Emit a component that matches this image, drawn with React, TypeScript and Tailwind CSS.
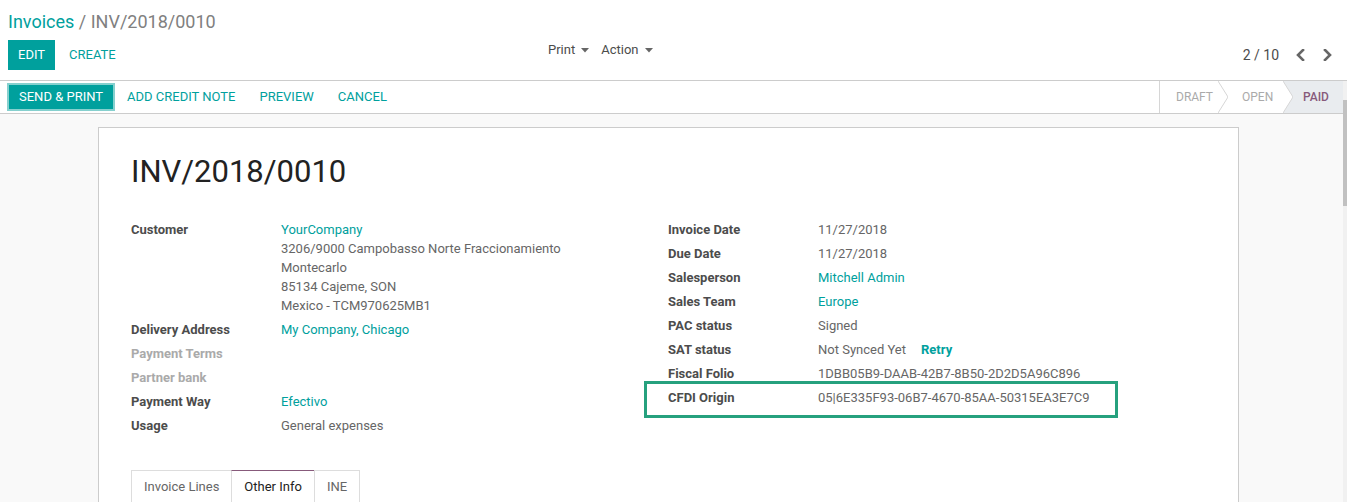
import React from 'react';

const TEAL = '#00A09D';

function Caret() {
  return (
    <svg width="8" height="5" viewBox="0 0 8 5" className="ml-[6px] inline-block">
      <polygon points="0,0 8,0 4,4.5" fill="#666" />
    </svg>
  );
}

function PagerArrow({ dir }: { dir: 'left' | 'right' }) {
  const pts = dir === 'left' ? '7,1 2,6 7,11' : '2,1 7,6 2,11';
  return (
    <svg width="9" height="12" viewBox="0 0 9 12">
      <polyline points={pts} fill="none" stroke="#666" strokeWidth="2.6" strokeLinecap="square" />
    </svg>
  );
}

function Chevron({ filled }: { filled?: boolean }) {
  return (
    <svg width="10" height="32" viewBox="0 0 10 32" className="shrink-0">
      {filled && <polygon points="0,0 10,0 10,16" fill="#e9ecef" />}
      {filled && <polygon points="10,16 10,32 0,32" fill="#e9ecef" />}
      <polyline points="0,0 10,16 0,32" fill="none" stroke="#d6d6d6" strokeWidth="1" />
    </svg>
  );
}

type Field = {
  label: string;
  lines?: string[];
  link?: boolean;
  muted?: boolean;
  extra?: React.ReactNode;
  highlight?: boolean;
};

const leftFields: Field[] = [
  {
    label: 'Customer',
    lines: [
      'YourCompany',
      '3206/9000 Campobasso Norte Fraccionamiento',
      'Montecarlo',
      '85134 Cajeme, SON',
      'Mexico - TCM970625MB1',
    ],
  },
  { label: 'Delivery Address', lines: ['My Company, Chicago'], link: true },
  { label: 'Payment Terms', muted: true },
  { label: 'Partner bank', muted: true },
  { label: 'Payment Way', lines: ['Efectivo'], link: true },
  { label: 'Usage', lines: ['General expenses'] },
];

const rightFields: Field[] = [
  { label: 'Invoice Date', lines: ['11/27/2018'] },
  { label: 'Due Date', lines: ['11/27/2018'] },
  { label: 'Salesperson', lines: ['Mitchell Admin'], link: true },
  { label: 'Sales Team', lines: ['Europe'], link: true },
  { label: 'PAC status', lines: ['Signed'] },
  {
    label: 'SAT status',
    lines: ['Not Synced Yet'],
    extra: <span className="ml-[15px] font-bold text-[#00A09D]">Retry</span>,
  },
  { label: 'Fiscal Folio', lines: ['1DBB05B9-DAAB-42B7-8B50-2D2D5A96C896'] },
  { label: 'CFDI Origin', lines: ['05|6E335F93-06B7-4670-85AA-50315EA3E7C9'], highlight: true },
];

function FieldRow({ field }: { field: Field }) {
  const lines = field.lines ?? [];
  return (
    <div className="relative flex pb-[5px] leading-[19px]">
      <div
        className={`w-[150px] shrink-0 font-bold ${field.muted ? 'text-[#aaaaaa]' : 'text-[#4c4c4c]'}`}
      >
        {field.label}
      </div>
      <div className="text-[#666]">
        {lines.map((line, i) => (
          <div key={i} className={field.link || (field.label === 'Customer' && i === 0) ? 'text-[#00A09D]' : ''}>
            {line}
            {i === 0 && field.extra}
          </div>
        ))}
      </div>
      {field.highlight && (
        <div className="absolute left-[-24px] top-[-7px] w-[474px] h-[37px] border-[3px] border-[#26a17e]" />
      )}
    </div>
  );
}

export default function App() {
  return (
    <div
      className="h-[502px] w-[1347px] overflow-hidden bg-white text-[13px]"
      style={{ fontFamily: 'Roboto, "Noto Sans", sans-serif' }}
    >
      {/* Control panel */}
      <div className="h-[81px] border-b border-[#cccccc] bg-white px-[8px] pt-[8px]">
        <div className="h-[28px] text-[18px] leading-[28px]">
          <span style={{ color: TEAL }}>Invoices</span>
          <span className="text-[#808080]"> / INV/2018/0010</span>
        </div>
        <div className="mt-[4px] flex h-[30px]">
          <div className="flex w-[540px] items-center">
            <button className="h-[30px] bg-[#00A09D] px-[10px] text-white uppercase">Edit</button>
            <button className="h-[30px] px-[14px] uppercase text-[#00A09D]">Create</button>
          </div>
          <div className="flex h-[20px] items-center leading-[20px] text-[#4c4c4c]">
            <span className="flex items-center">
              Print
              <Caret />
            </span>
            <span className="ml-[12px] flex items-center">
              Action
              <Caret />
            </span>
          </div>
          <div className="ml-auto flex items-center pr-[7px] text-[#4c4c4c]">
            <span className="text-[14px]">2 / 10</span>
            <span className="ml-[17px]">
              <PagerArrow dir="left" />
            </span>
            <span className="ml-[18px]">
              <PagerArrow dir="right" />
            </span>
          </div>
        </div>
      </div>

      <div className="flex h-[421px]">
        <div className="flex-1 bg-[#f9f9f9]">
          {/* Status bar */}
          <div className="flex h-[33px] items-stretch border-b border-[#cccccc] bg-white">
            <div className="flex items-center pl-[7px]">
              <button className="h-[28px] border-2 border-[#86d0ce] bg-[#00A09D] px-[10px] uppercase text-white">
                Send &amp; Print
              </button>
              <button className="h-[28px] px-[12px] uppercase text-[#00A09D]">Add Credit Note</button>
              <button className="h-[28px] px-[12px] uppercase text-[#00A09D]">Preview</button>
              <button className="h-[28px] px-[12px] uppercase text-[#00A09D]">Cancel</button>
            </div>
            <div className="ml-auto flex items-stretch border-l border-[#d6d6d6] text-[12px] uppercase">
              <div className="flex w-[58px] items-center pl-[16px] text-[#aaaaaa]">Draft</div>
              <Chevron />
              <div className="flex w-[55px] items-center pl-[14px] text-[#aaaaaa]">Open</div>
              <Chevron filled />
              <div className="flex w-[50px] items-center bg-[#e9ecef] pl-[10px] font-medium text-[#875A7B]">
                Paid
              </div>
            </div>
          </div>

          {/* Sheet */}
          <div className="ml-[98px] mt-[13px] w-[1141px] border border-[#cccccc] bg-white px-[32px] pt-[24px]">
            <h1 className="text-[31px] leading-[40px] text-[#222]">INV/2018/0010</h1>
            <div className="mt-[28px] flex">
              <div className="w-[537px]">
                {leftFields.map((f) => (
                  <FieldRow key={f.label} field={f} />
                ))}
              </div>
              <div className="flex-1">
                {rightFields.map((f) => (
                  <FieldRow key={f.label} field={f} />
                ))}
              </div>
            </div>

            {/* Notebook tabs */}
            <div className="mt-[30px] flex border-b border-[#dddddd]">
              <div className="h-[33px] border border-b-0 border-[#dddddd] px-[12px] leading-[32px] text-[#666]">
                Invoice Lines
              </div>
              <div className="-ml-px h-[33px] border border-b-0 border-[#dddddd] border-t-[#875A7B] bg-white px-[12px] leading-[32px] text-[#222]">
                Other Info
              </div>
              <div className="-ml-px h-[33px] border border-b-0 border-[#dddddd] px-[12px] leading-[32px] text-[#666]">
                INE
              </div>
            </div>
            <div className="h-[120px]" />
          </div>
        </div>

        {/* Scrollbar */}
        <div className="w-[4px] bg-[#f1f1f1]">
          <div className="mt-[19px] h-[106px] bg-[#c1c1c1]" />
        </div>
      </div>
    </div>
  );
}
